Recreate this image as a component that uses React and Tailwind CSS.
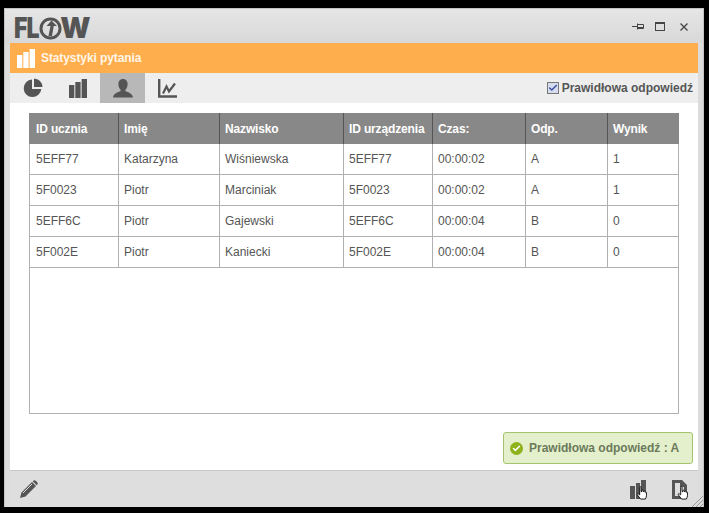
import React from 'react';
import { Check } from 'lucide-react';

const columns = [
  { label: 'ID ucznia', width: 'w-[90px]', cellWidth: 'w-[89px]' },
  { label: 'Imię', width: 'w-[101px]', cellWidth: 'w-[101px]' },
  { label: 'Nazwisko', width: 'w-[124px]', cellWidth: 'w-[124px]' },
  { label: 'ID urządzenia', width: 'w-[89px]', cellWidth: 'w-[89px]' },
  { label: 'Czas:', width: 'w-[93px]', cellWidth: 'w-[93px]' },
  { label: 'Odp.', width: 'w-[82px]', cellWidth: 'w-[82px]' },
  { label: 'Wynik', width: 'flex-1', cellWidth: 'flex-1' },
];

const rows = [
  ['5EFF77', 'Katarzyna', 'Wiśniewska', '5EFF77', '00:00:02', 'A', '1'],
  ['5F0023', 'Piotr', 'Marciniak', '5F0023', '00:00:02', 'A', '1'],
  ['5EFF6C', 'Piotr', 'Gajewski', '5EFF6C', '00:00:04', 'B', '0'],
  ['5F002E', 'Piotr', 'Kaniecki', '5F002E', '00:00:04', 'B', '0'],
];

const PieIcon = () => (
  <svg width="20" height="20" viewBox="0 0 20 20" fill="#555">
    <path d="M9 1.5A8.8 8.8 0 1 0 18.3 11H9Z" />
    <path d="M11 0.5A8.6 8.6 0 0 1 19.5 9H11Z" />
  </svg>
);

const BarsIcon = () => (
  <svg width="18" height="19" viewBox="0 0 18 19" fill="#555">
    <rect x="0" y="6" width="5.3" height="13" />
    <rect x="6.3" y="3" width="5.3" height="16" />
    <rect x="12.6" y="0" width="5.4" height="19" />
  </svg>
);

const UserIcon = () => (
  <svg width="20" height="19" viewBox="0 0 20 19" fill="#555">
    <path d="M10 0c3 0 4.6 2.2 4.6 5.2 0 2.3-1 4.4-2.2 5.5v1.5c2.7.9 7.2 2.3 7.6 6.3H0c.4-4 4.9-5.4 7.6-6.3v-1.5C6.4 9.6 5.4 7.5 5.4 5.2 5.4 2.2 7 0 10 0Z" />
  </svg>
);

const LineIcon = () => (
  <svg width="19" height="19" viewBox="0 0 19 19" fill="none" stroke="#555">
    <path d="M1.2 0v17.5h17.8" strokeWidth="2.4" />
    <path d="M5 14.5l3.5-7 2.5 5 6-8" strokeWidth="2.2" />
  </svg>
);

const PinIcon = () => (
  <svg width="12" height="8" viewBox="0 0 12 8" fill="none" stroke="#444">
    <path d="M0 3.5h5M5.500 0.5v6M5.5 1.5h6v4h-6M5.5 4.5h6" />
  </svg>
);

const HandCursor = () => (
  <svg width="12" height="14" viewBox="0 0 12 15" className="absolute -right-[2px] -bottom-[1px]">
    <path
      d="M3.5 1.5c0-1 1.5-1 1.5 0v4.5h1V5c0-.8 1.4-.8 1.4 0v1h.8c0-.8 1.3-.8 1.3 0v.8c0-.6 1.3-.6 1.3.2v3.5c0 1.5-.8 2.5-1.3 3.5H4.5L1 9.5c-.6-1 .5-1.7 1.2-1L3.5 9.5Z"
      fill="#fff"
      stroke="#111"
      strokeWidth="1"
    />
  </svg>
);

export default function App() {
  return (
    <div className="w-[709px] h-[513px] bg-black pt-[8px] pl-[4px] overflow-hidden font-['Liberation_Sans',Arial,sans-serif]">
      <div className="relative w-[700px] h-[499px] bg-[#dcdcdc] border-l border-t border-r border-[#c4c4c4] px-[5px] flex flex-col">
        {/* Title bar */}
        <div className="h-[34px] -mx-[5px] px-[5px] bg-gradient-to-b from-[#e6e6e6] to-[#d8d8d8] flex items-center justify-between shrink-0">
          <div className="flex items-center text-[#555] text-[28px] leading-none font-black font-['Inter',sans-serif] pl-[4px] pt-[4px]">
            <span className="inline-block tracking-[-1px] scale-x-[0.82] origin-left -mr-[5px]">FL</span>
            <svg width="23" height="23" viewBox="0 0 23 23" className="-mr-[2px]">
              <circle cx="11.5" cy="11.5" r="9.5" fill="none" stroke="#555" strokeWidth="3" />
              <path d="M12.5 3.5l5.500 5.5h-3.3L13 19h-3.5L11.5 9H7.5Z" fill="#555" />
            </svg>
            <span>W</span>
          </div>
          <div className="flex items-center gap-[11px] pr-[10px] pt-[1px] text-[#444]">
            <PinIcon />
            <div className="w-[10px] h-[9px] border border-[#444] border-t-2 mr-[4px]" />
            <svg width="8" height="8" viewBox="0 0 8 8" stroke="#444" strokeWidth="1.3">
              <path d="M0.5 0.5l7 7M7.5 0.5l-7 7" />
            </svg>
          </div>
        </div>

        {/* Orange header */}
        <div className="h-[30px] bg-[#ffae4d] flex items-center gap-[6px] pl-[7px] shrink-0">
          <svg width="18" height="19" viewBox="0 0 18 19" fill="#fff">
            <rect x="0" y="6" width="5.3" height="13" />
            <rect x="6.3" y="3" width="5.3" height="16" />
            <rect x="12.6" y="0" width="5.4" height="19" />
          </svg>
          <span className="text-[#fff6e8] text-[12px] font-bold tracking-[-0.1px]">Statystyki pytania</span>
        </div>

        {/* Toolbar */}
        <div className="h-[30px] bg-[#eeeeee] flex items-center shrink-0">
          <div className="w-[45px] h-full flex items-center justify-center"><PieIcon /></div>
          <div className="w-[45px] h-full flex items-center justify-center"><BarsIcon /></div>
          <div className="w-[45px] h-full flex items-center justify-center bg-[#b8b8b8]"><UserIcon /></div>
          <div className="w-[45px] h-full flex items-center justify-center"><LineIcon /></div>
          <label className="ml-auto mr-[5px] flex items-center gap-[3px] text-[12px] font-bold text-[#555]">
            <span className="w-[12px] h-[12px] border border-[#777] bg-[#d5dcf0] flex items-center justify-center">
              <Check size={10} strokeWidth={3.5} className="text-[#3a4f9a]" />
            </span>
            Prawidłowa odpowiedź
          </label>
        </div>

        {/* Content */}
        <div className="flex-1 bg-white flex flex-col pt-[10px] pl-[19px] pr-[5px] min-h-0">
          <div className="w-[650px] h-[301px] border border-[#b0b0b0] border-t-0 shrink-0">
            <div className="h-[31px] bg-[#888888] flex -mx-px">
              {columns.map((col, i) => (
                <div
                  key={col.label}
                  className={`${col.width} ${i < 6 ? 'border-r border-[#555]' : ''} ${i === 0 ? 'pl-[7px]' : 'pl-[5px]'} flex items-center text-white text-[12px] font-bold tracking-[-0.15px] whitespace-nowrap`}
                >
                  {col.label}
                </div>
              ))}
            </div>
            {rows.map((row) => (
              <div key={row[0]} className="h-[31px] flex border-b border-[#b0b0b0]">
                {row.map((cell, i) => (
                  <div
                    key={i}
                    className={`${columns[i].cellWidth} ${i === 0 ? 'pl-[6px]' : 'pl-[5px]'} ${i < 6 ? 'border-r border-[#b0b0b0]' : ''} flex items-center text-[#555] text-[12px]`}
                  >
                    {cell}
                  </div>
                ))}
              </div>
            ))}
          </div>

          <div className="flex justify-end mt-[18px]">
            <div className="w-[190px] h-[32px] bg-[#e4f0cb] border border-[#a5c36e] rounded-[3px] flex items-center gap-[6px] pl-[6px]">
              <span className="w-[13px] h-[13px] rounded-full bg-[#8eb21a] flex items-center justify-center">
                <Check size={9} strokeWidth={4} className="text-white" />
              </span>
              <span className="text-[12px] font-bold text-[#6b7a5c]">Prawidłowa odpowiedź : A</span>
            </div>
          </div>
        </div>

        {/* Footer */}
        <div className="h-[37px] bg-[#dedede] border-t border-[#c8c8c8] flex items-center justify-between pl-[10px] pr-[11px] shrink-0">
          <svg width="18" height="18" viewBox="0 0 18 18" fill="#555">
            <path d="M0 18l1.5-5.5L12 2l4 4L5.5 16.5Z" />
            <path d="M13 1c1-1 2-1 3 0l1 1c1 1 1 2 0 3l-.3.3-4-4Z" />
            <path d="M3 13l9-9" stroke="#dedede" strokeWidth="1" />
          </svg>
          <div className="flex items-center gap-[26px]">
            <div className="relative w-[16px] h-[19px]">
              <svg width="16" height="19" viewBox="0 0 16 19" fill="#555">
                <rect x="0" y="6" width="5" height="13" />
                <rect x="6" y="3" width="4" height="16" />
                <rect x="11" y="0" width="5" height="19" />
              </svg>
              <HandCursor />
            </div>
            <div className="relative w-[15px] h-[19px]">
              <svg width="15" height="19" viewBox="0 0 15 19" fill="#555">
                <path d="M0 0h10l5 5v14H0Zm3 3v13h9V7H8V3Z" />
              </svg>
              <HandCursor />
            </div>
          </div>
        </div>

        {/* Resize grip */}
        <svg width="12" height="12" viewBox="0 0 12 12" stroke="#999" className="absolute right-0 bottom-0">
          <path d="M12 1L1 12M12 5l-7 7M12 9l-3 3" />
        </svg>
      </div>
    </div>
  );
}
